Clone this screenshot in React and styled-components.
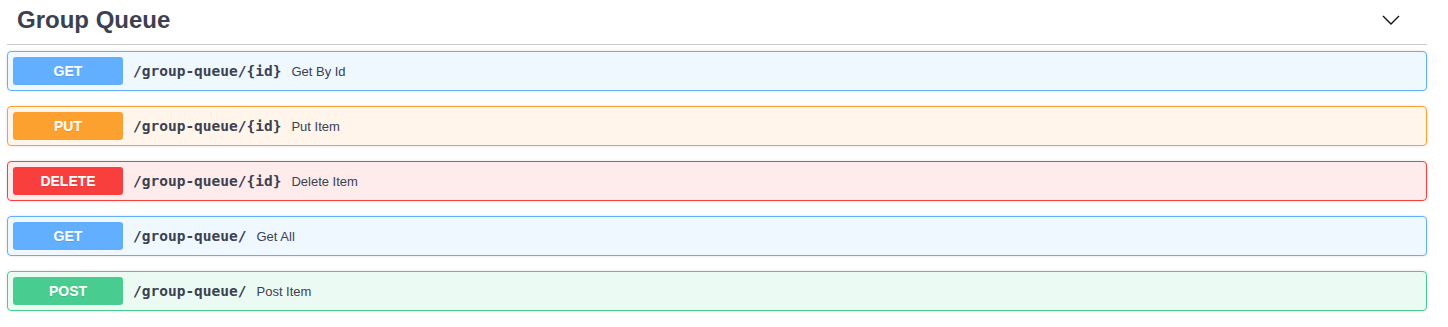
import React from 'react';
import styled, { createGlobalStyle } from 'styled-components';

const GlobalStyle = createGlobalStyle`
    body {
        margin: 0;
        background: #fff;
        font-family: "Liberation Sans", Arial, sans-serif;
        color: #3b4151;
    }
`;

const COLORS = {
    GET: '#61affe',
    PUT: '#fca130',
    DELETE: '#f93e3e',
    POST: '#49cc90',
};

const BG = {
    GET: 'rgba(97, 175, 254, 0.1)',
    PUT: 'rgba(252, 161, 48, 0.1)',
    DELETE: 'rgba(249, 62, 62, 0.1)',
    POST: 'rgba(73, 204, 144, 0.1)',
};

const WrapperStyle = styled.div`
    padding: 0 21px 0 7px;
`;

const TagHeader = styled.h4`
    display: flex;
    align-items: center;
    justify-content: space-between;
    height: 45px;
    box-sizing: border-box;
    margin: 0 0 6px;
    padding: 0 27px 5px 10px;
    border-bottom: 1px solid #cbcbcb;
    font-size: 24px;
    font-weight: 700;
    color: #3b4151;
`;

const Chevron = styled.svg`
    width: 18px;
    height: 10px;
    margin-top: 1px;
`;

const OpBlock = styled.div`
    display: flex;
    align-items: center;
    height: 40px;
    box-sizing: border-box;
    padding: 5px;
    margin-bottom: 15px;
    border: 1px solid ${p => COLORS[p.$method]};
    border-radius: 4px;
    background: ${p => BG[p.$method]};
    box-shadow: 0 0 3px rgba(0, 0, 0, 0.12);
`;

const Method = styled.span`
    width: 110px;
    height: 28px;
    line-height: 28px;
    text-align: center;
    border-radius: 3px;
    background: ${p => COLORS[p.$method]};
    color: #fff;
    font-size: 14px;
    font-weight: 700;
    text-shadow: 0 1px 0 rgba(0, 0, 0, 0.1);
`;

const Path = styled.span`
    padding: 0 10px;
    font-family: "DejaVu Sans Mono", "Liberation Mono", monospace;
    font-size: 14.5px;
    font-weight: 700;
    color: #3b4151;
`;

const Description = styled.span`
    font-size: 13px;
    color: #3b4151;
`;

const operations = [
    { method: 'GET', path: '/group-queue/{id}', summary: 'Get By Id' },
    { method: 'PUT', path: '/group-queue/{id}', summary: 'Put Item' },
    { method: 'DELETE', path: '/group-queue/{id}', summary: 'Delete Item' },
    { method: 'GET', path: '/group-queue/', summary: 'Get All' },
    { method: 'POST', path: '/group-queue/', summary: 'Post Item' },
];

export default function App() {
    return (
        <WrapperStyle>
            <GlobalStyle />
            <TagHeader>
                <span>Group Queue</span>
                <Chevron viewBox="0 0 18 10">
                    <polyline points="1,1 9,9 17,1" fill="none" stroke="#111" strokeWidth="1.4" />
                </Chevron>
            </TagHeader>
            {
                operations.map((op, i) =>
                    <OpBlock key={i} $method={op.method}>
                        <Method $method={op.method}>{op.method}</Method>
                        <Path>{op.path}</Path>
                        <Description>{op.summary}</Description>
                    </OpBlock>)
            }
        </WrapperStyle>
    );
}
